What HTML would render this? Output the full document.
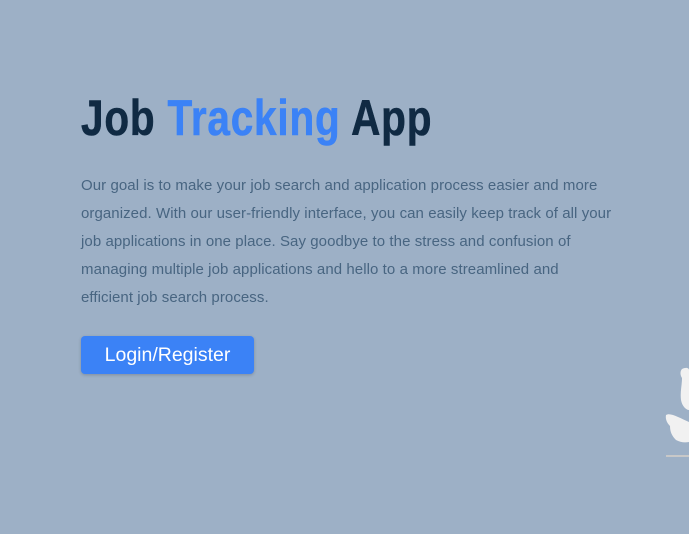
<!DOCTYPE html>
<html><head><style>
html,body{margin:0;width:689px;height:534px;overflow:hidden;background:#9db0c6;font-family:"Liberation Sans",sans-serif}
h1{position:absolute;left:81px;top:88px;margin:0;font-size:50px;line-height:60px;font-weight:bold;color:#102a43;white-space:nowrap;transform:scaleX(0.81);transform-origin:left top;letter-spacing:1px;-webkit-text-stroke:0.6px currentColor}
h1 span{color:#3b82f6}
p{position:absolute;left:81px;top:172px;margin:0;width:560px;font-size:15px;line-height:28px;color:#486581;letter-spacing:0.07px;white-space:nowrap}
.btn{position:absolute;left:81px;top:336px;width:173px;height:38px;background:#3b82f6;border-radius:4px;color:#fff;font-size:19.5px;line-height:38px;text-align:center;box-shadow:0 1px 3px rgba(0,0,0,.2)}
</style></head><body>
<h1>Job <span>Tracking</span> App</h1>
<p>Our goal is to make your job search and application process easier and more<br>organized. With our user-friendly interface, you can easily keep track of all your<br>job applications in one place. Say goodbye to the stress and confusion of<br>managing multiple job applications and hello to a more streamlined and<br>efficient job search process.</p>
<div class="btn">Login/Register</div>
<svg style="position:absolute;left:600px;top:340px" width="89" height="140">
<path d="M82 29 C86 27 89 28 89 30 L89 70 C86 70 82 66 81 60 C80 52 82 45 82 38 C80 35 80 31 82 29Z" fill="#f1f1f1"/>
<path d="M66 75 C70 72 80 78 89 82 L89 102 C84 103 80 102 76 100 C72 96 70 92 70 86 C68 84 65 80 66 75Z" fill="#f1f1f1"/>
<rect x="66" y="115" width="23" height="2" fill="#c8c8c8"/>
</svg>
</body></html>
